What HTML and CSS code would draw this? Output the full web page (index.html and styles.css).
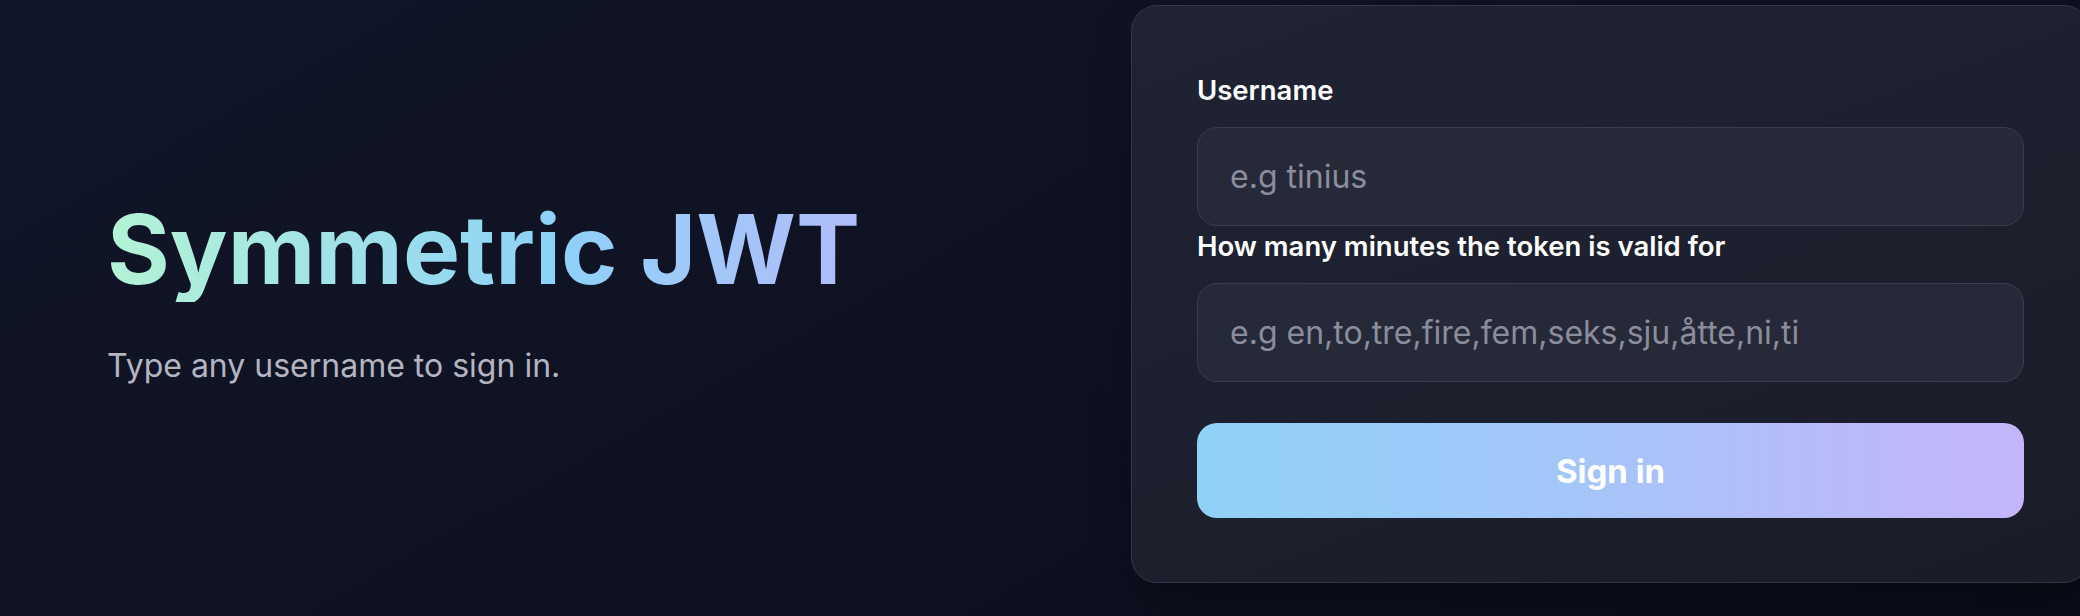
FILE: index.html
```html
<!DOCTYPE html>
<html lang="en">
<head>
<meta charset="utf-8">
<title>Symmetric JWT</title>
<link rel="stylesheet" href="styles.css">
</head>
<body>
<main class="page">
  <section class="intro">
    <h1 class="title">Symmetric JWT</h1>
    <p class="subtitle">Type any username to sign in.</p>
  </section>
  <form class="card">
    <label class="field-label" for="username">Username</label>
    <input class="field-input" id="username" type="text" placeholder="e.g tinius">
    <label class="field-label" for="minutes">How many minutes the token is valid for</label>
    <input class="field-input" id="minutes" type="text" placeholder="e.g en,to,tre,fire,fem,seks,sju,åtte,ni,ti">
    <button class="submit" type="button">Sign in</button>
  </form>
</main>
</body>
</html>
```

FILE: styles.css
```css
* { box-sizing: border-box; }

html, body {
  margin: 0;
  height: 100%;
  overflow: hidden;
}

body {
  background: linear-gradient(150deg, #111628 0%, #0e1222 50%, #0a0d19 100%);
  font-family: Inter, "Noto Sans", sans-serif;
  color: #ffffff;
}

.page {
  display: flex;
  align-items: center;
  width: 2090px;
  padding-top: 5px;
}

.intro {
  flex: 0 0 1131px;
  padding-left: 107px;
  padding-bottom: 5px;
}

.title {
  display: inline-block;
  margin: 0;
  font-size: 96px;
  line-height: 1.1;
  font-weight: 700;
  letter-spacing: 0;
  background: linear-gradient(90deg, #b3f3d5 0%, #9ee0ea 35%, #8dd1f8 60%, #a2c7f9 80%, #afbcf9 100%);
  -webkit-background-clip: text;
  background-clip: text;
  color: transparent;
}

.subtitle {
  margin: 44px 0 0;
  font-size: 32px;
  line-height: 40px;
  color: #b4b5c0;
}

.card {
  flex: 0 0 959px;
  display: flex;
  flex-direction: column;
  padding: 64px 65px;
  border: 1px solid #34374a;
  border-radius: 26px;
  background: linear-gradient(160deg, #202333 0%, #1c1f2c 60%, #1a1c28 100%);
  box-shadow: 0 20px 40px rgba(0, 0, 0, 0.25);
}

.field-label {
  display: block;
  margin: 4px 0 21px;
  font-size: 27.5px;
  line-height: 32px;
  font-weight: 600;
  color: #ffffff;
}

.field-input {
  display: block;
  width: 100%;
  height: 99px;
  padding: 0 32px;
  border: 1px solid #3a3d4c;
  border-radius: 20px;
  background: #262937;
  font-family: Inter, "Noto Sans", sans-serif;
  font-size: 32px;
  color: #ffffff;
  outline: none;
}

.field-input::placeholder {
  color: #8a8d9d;
}

.submit {
  margin-top: 41px;
  height: 95px;
  border: none;
  border-radius: 20px;
  background: linear-gradient(90deg, #8fd1f6 0%, #a4c6f9 45%, #b3bcf9 70%, #c4b5fa 100%);
  font-family: Inter, "Noto Sans", sans-serif;
  font-size: 33px;
  font-weight: 700;
  color: #ffffff;
  cursor: pointer;
}
```
